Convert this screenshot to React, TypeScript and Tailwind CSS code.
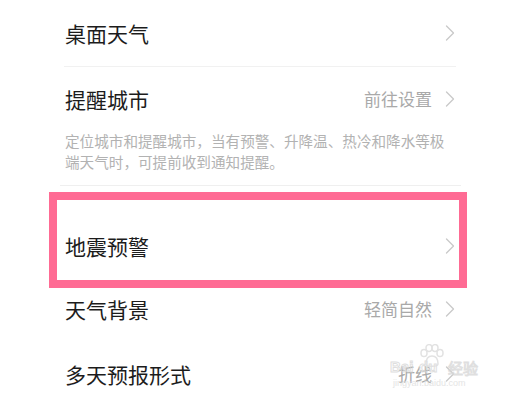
import React from "react";

const Chevron = () => (
  <svg width="10" height="16" viewBox="0 0 10 16" className="shrink-0">
    <path d="M1.5 1 L8.5 8 L1.5 15" fill="none" stroke="#c9c9c9" strokeWidth="1.3" strokeLinecap="round" strokeLinejoin="round" />
  </svg>
);

const Row = ({ title, value, h, pt = 0 }: { title: string; value?: string; h: number; pt?: number }) => (
  <div className="ml-[65px] w-[390px] flex items-center justify-between" style={{ height: h, paddingTop: pt }}>
    <span className="text-[21px] leading-[30px] text-[#1c1c1c]">{title}</span>
    <div className="flex items-center gap-[13px]">
      {value && <span className="text-[17px] leading-[24px] text-[#a9a9a9]">{value}</span>}
      <Chevron />
    </div>
  </div>
);

export default function App() {
  return (
    <div
      className="relative w-[506px] h-[403px] overflow-hidden bg-white"
      style={{ fontFamily: '"Noto Sans CJK SC", "Noto Sans", sans-serif' }}
    >
      <Row title="桌面天气" h={66} pt={0} />
      <div className="ml-[64px] w-[392px] h-px bg-[#f1f1f1]" />
      <div className="pt-[17px]">
        <Row title="提醒城市" value="前往设置" h={30} />
        <p className="ml-[65px] mt-[16px] text-[14.6px] leading-[21px] text-[#b2b2b2] whitespace-nowrap">
          定位城市和提醒城市，当有预警、升降温、热冷和降水等极
          <br />
          端天气时，可提前收到通知提醒。
        </p>
      </div>
      <div className="ml-[60px] w-[401px] h-px bg-[#efefef] mt-[13px]" />
      <div className="ml-[49px] mt-[6px] w-[418px] h-[96px] border-[8px] border-[#ff6b94] bg-white flex items-center pl-[8px] pt-[12px]">
        <div className="flex-1 flex items-center justify-between pr-[4px]">
          <span className="text-[21px] leading-[30px] text-[#1c1c1c]">地震预警</span>
          <Chevron />
        </div>
      </div>
      <Row title="天气背景" value="轻简自然" h={42} />
      <div className="h-[21px]" />
      <Row title="多天预报形式" value="折线" h={46} />

      {/* watermark */}
      <div className="absolute left-[389px] top-[343px] w-[92px] h-[46px] pointer-events-none opacity-80">
        <svg width="28" height="24" viewBox="0 0 28 24" className="absolute left-[29px] top-[1px]">
          <g fill="none" stroke="#dcdcdc" strokeWidth="1.5">
            <ellipse cx="6" cy="9" rx="3" ry="3.6" />
            <ellipse cx="11" cy="4" rx="3" ry="3.4" />
            <ellipse cx="17" cy="4" rx="3" ry="3.4" />
            <ellipse cx="22" cy="9" rx="3" ry="3.6" />
            <path d="M8 20 C8 14 11 12 14 12 C17 12 20 14 20 20 C20 23 8 23 8 20 Z" />
          </g>
        </svg>
        <span
          className="absolute left-[1px] top-[16px] text-[15px] leading-[16px] font-bold text-transparent"
          style={{ WebkitTextStroke: "1px #d8d8d8", fontFamily: '"Liberation Sans", sans-serif' }}
        >
          Bai
        </span>
        <span
          className="absolute left-[30px] top-[16px] text-[15px] leading-[16px] font-bold text-transparent"
          style={{ WebkitTextStroke: "1px #d8d8d8", fontFamily: '"Liberation Sans", sans-serif' }}
        >
          du
        </span>
        <span
          className="absolute left-[59px] top-[17px] text-[15px] leading-[16px] text-transparent"
          style={{ WebkitTextStroke: "1px #d8d8d8" }}
        >
          经验
        </span>
        <span
          className="absolute left-[4px] top-[35px] text-[9px] leading-[10px] text-[#dedede]"
          style={{ fontFamily: '"Liberation Sans", sans-serif' }}
        >
          jingyan.baidu.com
        </span>
      </div>
    </div>
  );
}
